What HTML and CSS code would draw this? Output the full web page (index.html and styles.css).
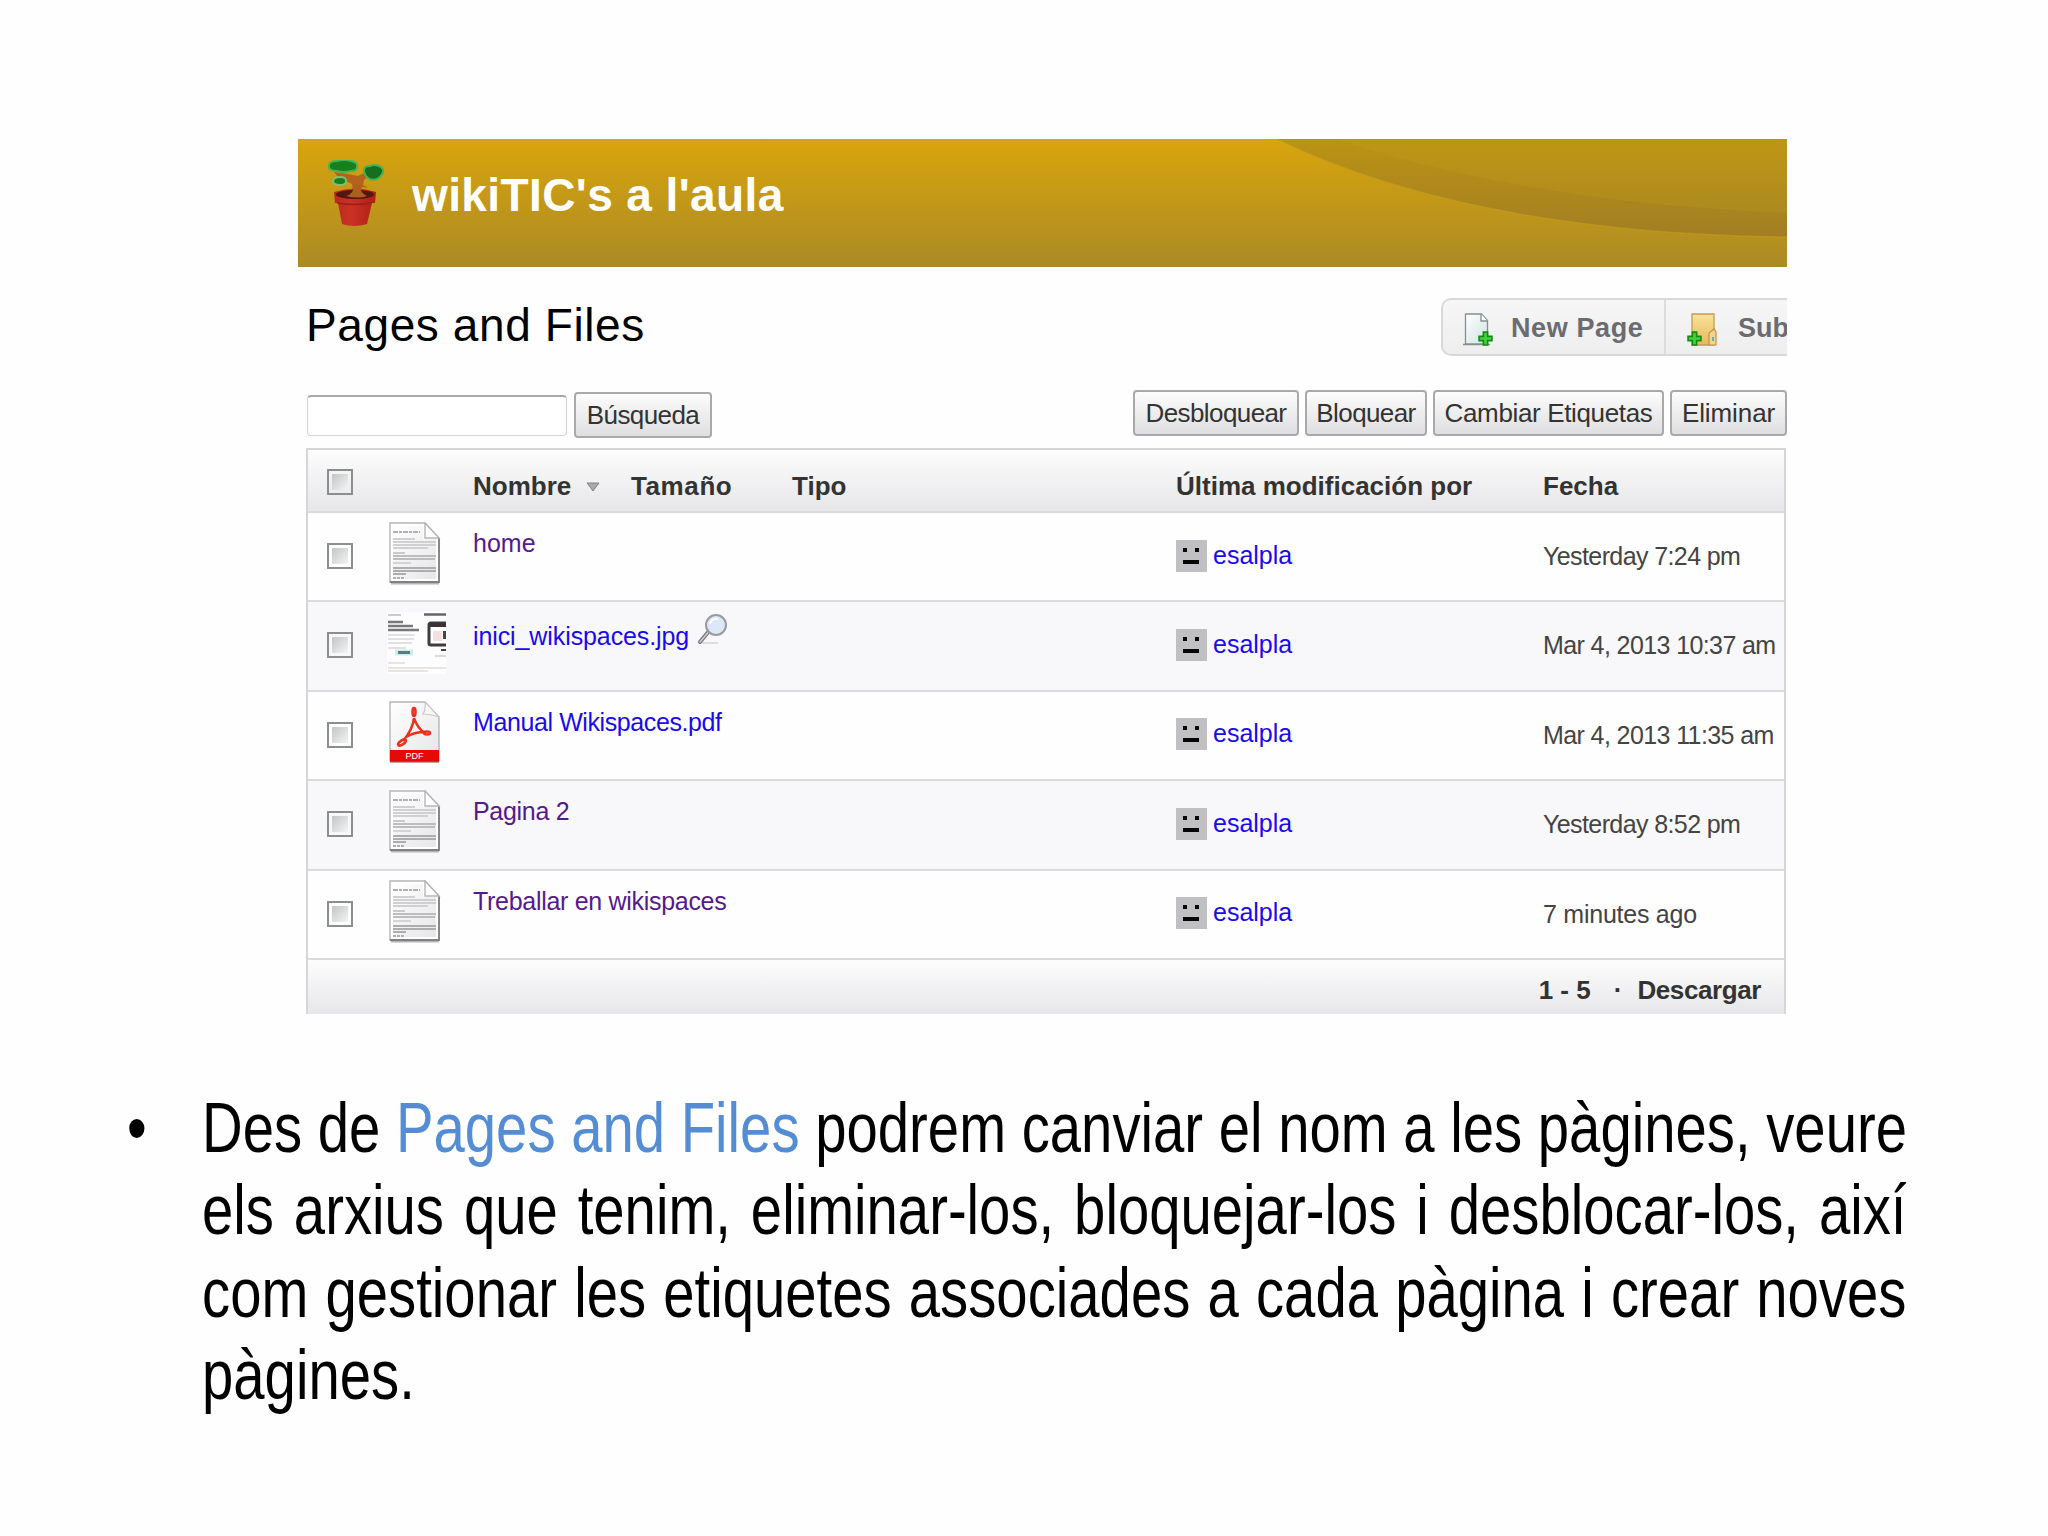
FILE: index.html
```html
<!DOCTYPE html>
<html lang="ca">
<head>
    <meta charset="UTF-8">
    <meta name="viewport" content="width=device-width, initial-scale=1.0">
    <title>Pages and Files</title>
    <link rel="stylesheet" href="styles.css">
</head>
<body>
    <!-- shared icons -->
    <svg class="defs" width="0" height="0">
        <defs>
            <linearGradient id="paper" x1="0" y1="0" x2="1" y2="1">
                <stop offset="0" stop-color="#fff"/>
                <stop offset="1" stop-color="#e6e6e8"/>
            </linearGradient>
            <linearGradient id="pot" x1="0" y1="0" x2="1" y2="0">
                <stop offset="0" stop-color="#b82a1c"/>
                <stop offset="0.4" stop-color="#cb3226"/>
                <stop offset="1" stop-color="#b01d15"/>
            </linearGradient>
            <linearGradient id="folder" x1="0" y1="0" x2="0" y2="1">
                <stop offset="0" stop-color="#fbe29a"/>
                <stop offset="1" stop-color="#e5b95c"/>
            </linearGradient>
            <linearGradient id="sheet" x1="0" y1="0" x2="1" y2="1">
                <stop offset="0" stop-color="#ffffff"/>
                <stop offset="1" stop-color="#cfe3e3"/>
            </linearGradient>
        </defs>
        <symbol id="doc" viewBox="0 0 52 64">
            <path d="M2 61.5h48" stroke="#b5b5b7" stroke-width="2"/>
            <path d="M1 1h35l14 15v44H1z" fill="#fff" stroke="#b5b5b7" stroke-width="1.4"/>
            <path d="M4 4h30v13h13v40H4z" fill="url(#paper)"/>
            <path d="M50 16v44H1" fill="none" stroke="#808083" stroke-width="1.8"/>
            <path d="M36 1v15h14z" fill="#fff" stroke="#b5b5b7" stroke-width="1.4"/>
            <g stroke="#b0b0b3" stroke-width="1.8">
                <path d="M4 10h27" stroke-dasharray="5 1 3 1"/>
                <path d="M4 17h22M4 20h43M4 23h43M4 26h35" stroke="#d0d0d3"/>
                <path d="M4 31h12" stroke="#c4c4c7"/>
                <path d="M4 34h43M4 37h42" stroke="#bdbdc0"/>
                <path d="M4 41h18" stroke="#d0d0d3"/>
                <path d="M4 46h43M4 49h43M4 52h13" stroke="#adadb0" stroke-width="2.2"/>
                <path d="M4 56h11" stroke-dasharray="3 1"/>
            </g>
        </symbol>
        <symbol id="plus" viewBox="0 0 14 14">
            <path d="M5 1h4v4h4v4H9v4H5V9H1V5h4z" fill="#41d23c" stroke="#128a14" stroke-width="1.5"/>
        </symbol>
        <symbol id="face" viewBox="0 0 31 32">
            <path d="M0 0h31v32H0z" fill="#c0bfc2"/>
            <path d="M7 8h4v4H7zM19 8h4v4h-4zM7 20h16v4H7z" fill="#050505"/>
        </symbol>
    </svg>

    <div class="slide">
        <div class="screen">
            <div class="banner">
                <svg class="swoosh" viewBox="0 0 512 128">
                    <defs>
                        <linearGradient id="sw" x1="0" y1="0" x2="0" y2="1">
                            <stop offset="0" stop-color="#bb9314"/>
                            <stop offset="1" stop-color="#a27e23"/>
                        </linearGradient>
                        <linearGradient id="sw2" x1="0" y1="0" x2="0" y2="1">
                            <stop offset="0" stop-color="#be9614"/>
                            <stop offset="1" stop-color="#ad8a20"/>
                        </linearGradient>
                    </defs>
                    <path d="M2 0C120 58 290 96 512 98V0z" fill="url(#sw)"/>
                    <path d="M60 0C180 40 330 66 512 74V0z" fill="url(#sw2)"/>
                    <path d="M2 0C120 58 290 96 512 98" fill="none" stroke="#c29d22" stroke-width="1.5" opacity="0.6"/>
                </svg>
                <svg class="plant" viewBox="0 0 56 68">
                    <path d="M6 12l14 2 10 2 8-4 6 2-8 6-1 5 5 3-6-1-2 8H20q6-5 4-11L10 17z" fill="#b5621c"/>
                    <path d="M1 5q1-4 8-4 8-2 14 0 7 1 6 6 0 4-6 4-8 2-14 0Q0 11 1 5z" fill="#16801c" stroke="#43b455" stroke-width="2"/>
                    <path d="M36 10q0-4 6-4 4-2 9 0 5 2 4 6-1 4-6 7-5 2-9-1-4-3-4-8z" fill="#166f1e" stroke="#43b455" stroke-width="2"/>
                    <path d="M5 21q1-4 7-4 7 0 6 5-1 3-6 3-7 0-7-4z" fill="#16801c" stroke="#7cc070" stroke-width="2"/>
                    <path d="M6 32q21-7 42 0l-1 11h-3l-5 21q-13 4-25 0L10 43H7z" fill="url(#pot)"/>
                    <ellipse cx="27" cy="34.500" rx="19" ry="4.500" fill="#54170f"/>
                    <path d="M9 43q18 3 35 0" fill="none" stroke="#9c2017" stroke-width="1.500"/>
                    <path d="M18 36q8-2 8-11h6q0 8 7 11-9 3-21 0z" fill="#ad5f20"/>
                </svg>
                <span class="site-name">wikiTIC's a l'aula</span>
            </div>

            <div class="head">
                <h1>Pages and Files</h1>
                <div class="tools">
                    <a class="tool">
                        <svg width="31" height="33" viewBox="0 0 31 33">
                            <path d="M0 31.500h27" stroke="#8b8f8f" stroke-width="1.500"/>
                            <path d="M2.500 1h16l6 6.500V31h-22z" fill="url(#sheet)" stroke="#82908f" stroke-width="1.300"/>
                            <path d="M18 1v7h6.500" fill="#fff" stroke="#82908f" stroke-width="1.300"/>
                            <use href="#plus" x="15" y="18" width="15" height="15"/>
                        </svg>
                        New Page
                    </a>
                    <a class="tool second">
                        <svg width="31" height="33" viewBox="0 0 31 33">
                            <path d="M5 1h22v31H5z" fill="url(#folder)" stroke="#c29c50" stroke-width="1.300"/>
                            <path d="M22 32V20l5-4 2 3v13z" fill="#f3d48d" stroke="#c08f45" stroke-width="1.200"/>
                            <path d="M26 24v4" stroke="#6aa9b5" stroke-width="2"/>
                            <use href="#plus" x="0" y="18" width="15" height="15"/>
                        </svg>
                        Sub
                    </a>
                </div>
            </div>

            <div class="actions">
                <input class="search" type="text">
                <button class="btn find">Búsqueda</button>
                <div class="right">
                    <button class="btn unlock">Desbloquear</button>
                    <button class="btn lock">Bloquear</button>
                    <button class="btn tags">Cambiar Etiquetas</button>
                    <button class="btn delete">Eliminar</button>
                </div>
            </div>

            <div class="table">
                <div class="row header">
                    <span class="check"></span>
                    <span></span>
                    <span class="sorted">Nombre
                        <svg width="14" height="10" viewBox="0 0 14 10"><path d="M1 1h12L7 9z" fill="#a9a9ab" stroke="#858588"/></svg>
                    </span>
                    <span class="size">Tamaño</span>
                    <span>Tipo</span>
                    <span>Última modificación por</span>
                    <span>Fecha</span>
                </div>
                <div class="row">
                    <span class="check"></span>
                    <svg class="icon"><use href="#doc"/></svg>
                    <a class="name visited">home</a>
                    <span></span><span></span>
                    <a class="user"><svg width="31" height="32"><use href="#face"/></svg>esalpla</a>
                    <span class="date">Yesterday 7:24 pm</span>
                </div>
                <div class="row even">
                    <span class="check"></span>
                    <svg class="icon thumb" viewBox="0 0 59 62">
                        <path d="M0 0h59v62H0z" fill="#fdfdfd"/>
                        <path d="M1 3h13" stroke="#aaa" stroke-width="1.200"/>
                        <path d="M37 2.500h22" stroke="#666" stroke-width="2.500"/>
                        <g stroke="#77777c" stroke-width="2.600">
                            <path d="M1 10h15M1 14h25M1 18h31"/>
                        </g>
                        <path d="M1 23h27M1 27h26M1 31h24M1 36h18" stroke="#d8d8da" stroke-width="1.500"/>
                        <path d="M59 11H44q-2 0-2 2v18q0 2 2 2h15" fill="#fff" stroke="#3c3c3f" stroke-width="3"/>
                        <path d="M43 13h16" stroke="#3b3033" stroke-width="4"/>
                        <path d="M46 19h9v10h-9z" fill="#f5dfdf"/>
                        <path d="M57.500 19v8" stroke="#444" stroke-width="3"/>
                        <path d="M54 38h5" stroke="#444" stroke-width="2"/>
                        <path d="M48 44h11" stroke="#ccc" stroke-width="1.500"/>
                        <path d="M8 40.500h18" stroke="#c9eee5" stroke-width="6"/>
                        <path d="M11 40.500h12" stroke="#5c7c85" stroke-width="3"/>
                        <path d="M1 51h17M1 56h58M1 59h40" stroke="#dfdbd9" stroke-width="1.500"/>
                    </svg>
                    <a class="name file">inici_wikispaces.jpg<svg width="31" height="33" viewBox="0 0 31 33">
                            <path d="M5 30h16" stroke="#ddd" stroke-width="2"/>
                            <path d="M12 18L3 29" stroke="#77777b" stroke-width="4" stroke-linecap="round"/>
                            <path d="M11 19.500L3 29" stroke="#d0d0d2" stroke-width="1.500" stroke-linecap="round"/>
                            <circle cx="19" cy="12" r="10" fill="#dce7f7" stroke="#9a9a9e" stroke-width="2"/>
                            <path d="M13 11q2-6 8-5" fill="none" stroke="#fff" stroke-width="2"/>
                        </svg></a>
                    <span></span><span></span>
                    <a class="user"><svg width="31" height="32"><use href="#face"/></svg>esalpla</a>
                    <span class="date">Mar 4, 2013 10:37 am</span>
                </div>
                <div class="row">
                    <span class="check"></span>
                    <svg class="icon" viewBox="0 0 52 64">
                        <path d="M1 1h35l14 15v44H1z" fill="url(#paper)" stroke="#b5b5b7" stroke-width="1.400"/>
                        <path d="M36 1q1 8-2 12 8 0 16 3z" fill="#f8f8f8" stroke="#c9c9cb" stroke-width="1.200"/>
                        <path d="M1 49h49v11.500H1z" fill="#e30b04"/>
                        <path d="M1 60.800h49" stroke="#8f3a34" stroke-width="1.200"/>
                        <g fill="none" stroke="#e8331c" stroke-width="2.600">
                            <path d="M25 17q-1 11-11 23M25 17q3 10 12 16M17 36q8-5 19-5"/>
                            <ellipse cx="25" cy="11" rx="1.500" ry="4"/>
                            <ellipse cx="38" cy="32" rx="3" ry="1.500"/>
                            <ellipse cx="13" cy="41.500" rx="4.500" ry="2" transform="rotate(-35 13 41.500)"/>
                        </g>
                        <text class="pdf-label" x="25.500" y="58">PDF</text>
                    </svg>
                    <a class="name manual">Manual Wikispaces.pdf</a>
                    <span></span><span></span>
                    <a class="user"><svg width="31" height="32"><use href="#face"/></svg>esalpla</a>
                    <span class="date">Mar 4, 2013 11:35 am</span>
                </div>
                <div class="row even">
                    <span class="check"></span>
                    <svg class="icon"><use href="#doc"/></svg>
                    <a class="name visited tight">Pagina 2</a>
                    <span></span><span></span>
                    <a class="user"><svg width="31" height="32"><use href="#face"/></svg>esalpla</a>
                    <span class="date">Yesterday 8:52 pm</span>
                </div>
                <div class="row">
                    <span class="check"></span>
                    <svg class="icon"><use href="#doc"/></svg>
                    <a class="name visited tight">Treballar en wikispaces</a>
                    <span></span><span></span>
                    <a class="user"><svg width="31" height="32"><use href="#face"/></svg>esalpla</a>
                    <span class="date ago">7 minutes ago</span>
                </div>
                <div class="footer">
                    <span>1 - 5</span>
                    <span>·</span>
                    <span class="download">Descargar</span>
                </div>
            </div>
        </div>

        <div class="note">
            <span class="bullet">•</span>
            <div class="note-text">
                <p>Des de <em>Pages and Files</em> podrem canviar el nom a les pàgines, veure</p>
                <p>els arxius que tenim, eliminar-los, bloquejar-los i desblocar-los, així</p>
                <p>com gestionar les etiquetes associades a cada pàgina i crear noves</p>
                <p class="last">pàgines.</p>
            </div>
        </div>
    </div>
</body>
</html>
```

FILE: styles.css
```css
* {
    box-sizing: border-box;
}

body {
    margin: 0;
    background-color: #fefefe;
    font-family: "Liberation Sans", Arial, sans-serif;
    color: #333;
}

.defs {
    display: block;
}

.slide {
    width: 2048px;
    height: 1536px;
    padding-top: 139px;
    overflow: hidden;
}

.screen {
    width: 1489px;
    height: 875px;
    margin-left: 298px;
    overflow: hidden;
}

/* banner */
.banner {
    position: relative;
    display: flex;
    height: 128px;
    padding: 21px 0 0 30px;
    background: linear-gradient(#d9a50d, #ab8a25);
}

.swoosh {
    position: absolute;
    top: 0;
    right: 0;
    width: 512px;
    height: 128px;
}

.plant {
    width: 56px;
    height: 68px;
}

.site-name {
    margin-left: 28px;
    padding-top: 9px;
    font-size: 46px;
    line-height: 52px;
    font-weight: bold;
    letter-spacing: 0.4px;
    color: white;
}

/* title and page tools */
.head {
    display: flex;
    justify-content: space-between;
    height: 124px;
    padding-left: 8px;
}

h1 {
    margin: 32px 0 0;
    font-size: 46px;
    line-height: 52px;
    font-weight: normal;
    letter-spacing: 0.6px;
    color: #000;
}

.tools {
    display: flex;
    width: 346px;
    height: 58px;
    margin-top: 31px;
    border: 2px solid #d9d9db;
    border-right: none;
    border-radius: 10px 0 0 10px;
    background: linear-gradient(#f6f6f6, #eeeeef);
    overflow: hidden;
}

.tool {
    display: flex;
    flex: none;
    gap: 17px;
    width: 221px;
    padding: 13px 0 0 20px;
    font-size: 27px;
    line-height: 30px;
    font-weight: bold;
    letter-spacing: 0.6px;
    color: #6c6b70;
    white-space: nowrap;
}

.tool.second {
    gap: 20px;
    padding-left: 21px;
    border-left: 2px solid #dcdcde;
    letter-spacing: 0;
}

/* search and buttons */
.actions {
    display: flex;
    align-items: flex-start;
    height: 57px;
    padding-left: 9px;
}

.search {
    width: 260px;
    height: 41px;
    margin: 4px 7px 0 0;
    border: 1.5px solid #d5d5d7;
    border-top: 2px solid #a9a9ab;
    border-radius: 4px;
    background-color: #fff;
}

.btn {
    height: 46px;
    padding: 1px 0 0;
    border: 2px solid #a9a8ab;
    border-radius: 4px;
    background: linear-gradient(#fcfcfc, #dfdfe1);
    font-family: inherit;
    font-size: 26px;
    line-height: 41px;
    letter-spacing: -0.6px;
    color: #333;
    white-space: nowrap;
}

.find {
    width: 138px;
    margin-top: 1px;
}

.right {
    display: flex;
    gap: 6px;
    margin: -1px 0 0 auto;
}

.unlock {
    width: 166px;
}

.lock {
    width: 122px;
}

.tags {
    width: 231px;
    letter-spacing: -0.35px;
}

.delete {
    width: 117px;
    letter-spacing: -0.1px;
}

/* file list */
.table {
    width: 1480px;
    margin-left: 8px;
    border: 2px solid #d6d5d8;
    border-bottom: none;
}

.row {
    display: grid;
    grid-template-columns: 82px 83px 158px 161px 384px 367px 1fr;
    height: 89.4px;
    border-bottom: 2px solid #dbdadd;
    background-color: #fefefe;
    font-size: 25px;
    line-height: 30px;
    white-space: nowrap;
}

.row.even {
    background-color: #f8f7fa;
}

.row.header {
    height: 63px;
    padding-top: 21px;
    background: linear-gradient(#fdfdfd, #e6e5e8);
    font-size: 26px;
    font-weight: bold;
}

.check {
    width: 26px;
    height: 26px;
    margin: 30px 0 0 19px;
    border: 2px solid #8c8e8e;
    background: linear-gradient(135deg, #c3c5c6, #f4f4f4) content-box;
    padding: 3px;
    background-color: #fafafa;
}

.header .check {
    margin-top: -2px;
}

.sorted svg {
    margin: 0 0 3px 8px;
}

.size {
    letter-spacing: 0.6px;
}

.icon {
    width: 52px;
    height: 64px;
    margin: 9px 0 0 -1px;
}

.icon.thumb {
    width: 59px;
    height: 62px;
    margin: 10px 0 0 -3px;
}

.pdf-label {
    font-size: 9px;
    fill: #fff;
    text-anchor: middle;
}

.name {
    padding-top: 15px;
    color: #1a0bea;
}

.visited {
    color: #551a8b;
}

.file {
    display: flex;
    gap: 8px;
    padding-top: 11px;
    line-height: 46px;
    letter-spacing: -0.1px;
}

.file svg {
    flex: none;
}

.manual {
    letter-spacing: -0.4px;
}

.tight {
    letter-spacing: -0.3px;
}

.user {
    display: flex;
    gap: 6px;
    padding-top: 26.5px;
    color: #1a0bea;
}

.date {
    padding-top: 28px;
    letter-spacing: -0.6px;
    color: #444;
}

.ago {
    letter-spacing: -0.25px;
}

.footer {
    display: flex;
    justify-content: flex-end;
    gap: 23px;
    height: 56px;
    padding: 15px 23px 0 0;
    background: linear-gradient(#fdfdfd, #e6e5e8);
    font-size: 26px;
    line-height: 30px;
    font-weight: bold;
}

.download {
    margin-left: -8px;
    letter-spacing: -0.4px;
}

/* explanation under the capture, condensed type */
.note {
    display: flex;
    margin-top: 73px;
    padding-left: 127px;
    font-size: 70px;
    line-height: 82.3px;
    color: #000;
}

.bullet {
    flex: none;
    width: 75px;
    transform: scaleX(0.804);
    transform-origin: left;
}

.note-text {
    flex: none;
    width: 2120px;
    transform: scaleX(0.804);
    transform-origin: left;
}

.note p {
    margin: 0;
    text-align: justify;
    text-align-last: justify;
    white-space: nowrap;
}

.note .last {
    text-align-last: left;
}

.note em {
    font-style: normal;
    color: #548dd4;
}
```
